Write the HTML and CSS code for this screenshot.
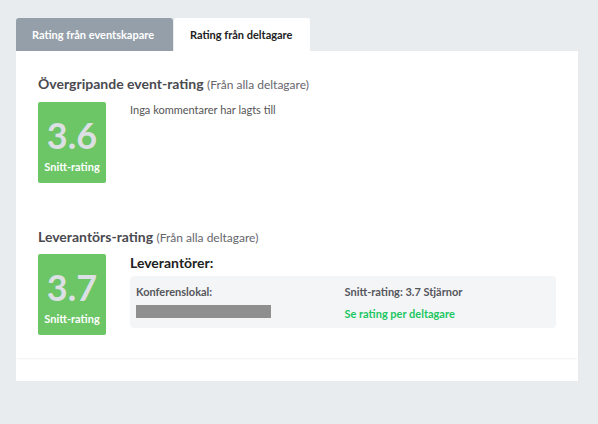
FILE: index.html
```html
<!DOCTYPE html>
<html lang="sv">
<head>
  <meta charset="UTF-8">
  <meta name="viewport" content="width=device-width, initial-scale=1.0">
  <title>Rating</title>
  <link rel="stylesheet" href="styles.css">
</head>
<body>
  <div class="page">
    <div class="tabs">
      <div class="tab">Rating från eventskapare</div>
      <div class="tab active">Rating från deltagare</div>
    </div>

    <div class="panel">
      <div class="card">
        <div class="section">
          <h3>Övergripande event-rating <span class="sub">(Från alla deltagare)</span></h3>
          <div class="row">
            <div class="score">
              <div class="value">3.6</div>
              <div class="label">Snitt-rating</div>
            </div>
            <div class="comments">Inga kommentarer har lagts till</div>
          </div>
        </div>

        <div class="section">
          <h3>Leverantörs-rating <span class="sub">(Från alla deltagare)</span></h3>
          <div class="row">
            <div class="score">
              <div class="value">3.7</div>
              <div class="label">Snitt-rating</div>
            </div>
            <div class="suppliers">
              <h4>Leverantörer:</h4>
              <div class="supplier">
                <div class="col">
                  <div class="name">Konferenslokal:</div>
                  <div class="hidden-bar"></div>
                </div>
                <div class="col">
                  <div class="name">Snitt-rating: 3.7 Stjärnor</div>
                  <a class="link" href="#">Se rating per deltagare</a>
                </div>
              </div>
            </div>
          </div>
        </div>
      </div>
    </div>
  </div>
</body>
</html>
```

FILE: styles.css
```css
body { margin: 0; background: #e9ecef; font-family: Lato, "Open Sans", Arial, sans-serif; color: #4a4a4f; }
.page { padding: 18px 20px 0 16px; }

.tabs { display: flex; gap: 1px; }
.tab { height: 33px; line-height: 33px; padding: 0 16px; font-size: 11px; font-weight: bold; color: #fff; background: #959fa9; border-radius: 3px 3px 0 0; }
.tab:first-child { width: 125px; }
.tab.active { background: #fff; color: #222; width: 104px; }

.panel { background: #fff; padding-bottom: 23px; }
.card { padding: 24px 22px 23px; box-shadow: 0 2px 2px -1px rgba(0, 0, 0, 0.06); }

.section + .section { margin-top: 45px; }
h3 { margin: 0 0 8px; font-size: 14px; line-height: 18px; font-weight: bold; color: #4a4a50; }
.section + .section h3 { margin-bottom: 7px; }
h3 .sub { font-size: 12px; font-weight: normal; color: #66666c; }

.row { display: flex; gap: 24px; }
.score { flex: none; width: 68px; height: 81px; background: #6cc665; border-radius: 2px; text-align: center; }
.score .value { padding-top: 15px; font-size: 36px; font-weight: bold; line-height: 36px; color: #dcdfe3; }
.score .label { margin-top: 7px; font-size: 11px; line-height: 13px; font-weight: bold; color: #fff; }

.comments { font-size: 11px; line-height: 13px; color: #555; padding-top: 1px; }

.suppliers { flex: 1; }
.suppliers h4 { margin: 0 0 5px; font-size: 14px; line-height: 17px; font-weight: bold; color: #222; }
.supplier { display: flex; background: #f4f5f7; border-radius: 4px; padding: 9px 7px 8px 6px; }
.supplier .col { flex: 1; }
.supplier .col + .col { padding-left: 4px; }
.name { font-size: 11px; line-height: 13px; font-weight: bold; color: #55565c; }
.hidden-bar { margin-top: 7px; width: 135px; height: 13px; background: #8f8f8f; }
.link { display: block; margin-top: 9px; font-size: 11px; line-height: 13px; font-weight: bold; color: #20c761; text-decoration: none; }
```
